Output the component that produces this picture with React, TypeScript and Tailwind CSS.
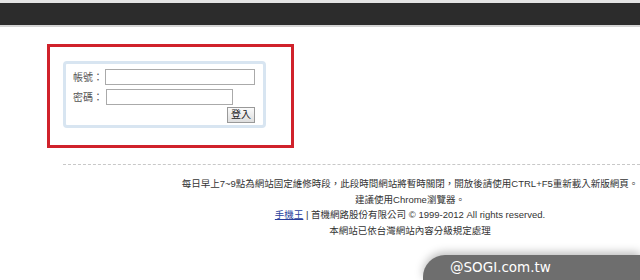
export default function App() {
  return (
    <div
      className="relative h-[280px] w-[640px] overflow-hidden bg-white text-[#333]"
      style={{ fontFamily: '"Liberation Sans", "Noto Sans CJK TC", sans-serif' }}
    >
      <div className="h-[27px] border-t-[3px] border-b-[2px] border-t-[#e4e4e4] border-b-[#d4d4d4] bg-[#2c2c2c]" />

      <div className="pl-[47px] pt-[17px]">
        <div className="h-[104px] w-[247px] border-[3px] border-[#d0222b] pl-[13px] pt-[14px]">
          <div className="h-[67px] w-[203px] rounded-[4px] border-[3px] border-[#d8e5f1] pl-[7px] pr-[8px] pt-[5px] text-[10px] text-[#555]">
            <div className="flex items-center">
              <span className="w-[32px]">帳號：</span>
              <input className="h-[16px] w-[150px] border border-[#aaa] bg-white outline-none" />
            </div>
            <div className="mt-[4px] flex items-center">
              <span className="w-[33px]">密碼：</span>
              <input type="password" className="h-[16px] w-[127px] border border-[#aaa] bg-white outline-none" />
            </div>
            <div className="mt-[2px] flex justify-end">
              <button className="h-[16px] w-[28px] border border-[#999] bg-gradient-to-b from-[#fafafa] to-[#dedede] text-[10px] leading-none text-[#222]">
                登入
              </button>
            </div>
          </div>
        </div>
      </div>

      <div className="ml-[63px] mt-[16px] border-t border-dashed border-[#c8c8c8]" />

      <div className="pl-[180px] pt-[11px] text-center text-[9.5px] leading-[15.7px] text-[#333]">
        <p>每日早上7~9點為網站固定維修時段，此段時間網站將暫時關閉，開放後請使用CTRL+F5重新載入新版網頁。</p>
        <p>建議使用Chrome瀏覽器。</p>
        <p>
          <a href="#" className="text-[#2a3f9c] underline">手機王</a> | 首機網路股份有限公司 © 1999-2012 All rights reserved.
        </p>
        <p>本網站已依台灣網站內容分級規定處理</p>
      </div>

      <div
        className="absolute bottom-0 right-0 h-[25px] w-[217px] rounded-tl-[22px] bg-[#6e6e6e] pl-[27px] text-[13.5px] leading-[25px] text-white shadow-[0_-3px_8px_rgba(0,0,0,0.25)]"
        style={{ fontFamily: '"DejaVu Sans", sans-serif' }}
      >
        @SOGI.com.tw
      </div>
    </div>
  );
}
